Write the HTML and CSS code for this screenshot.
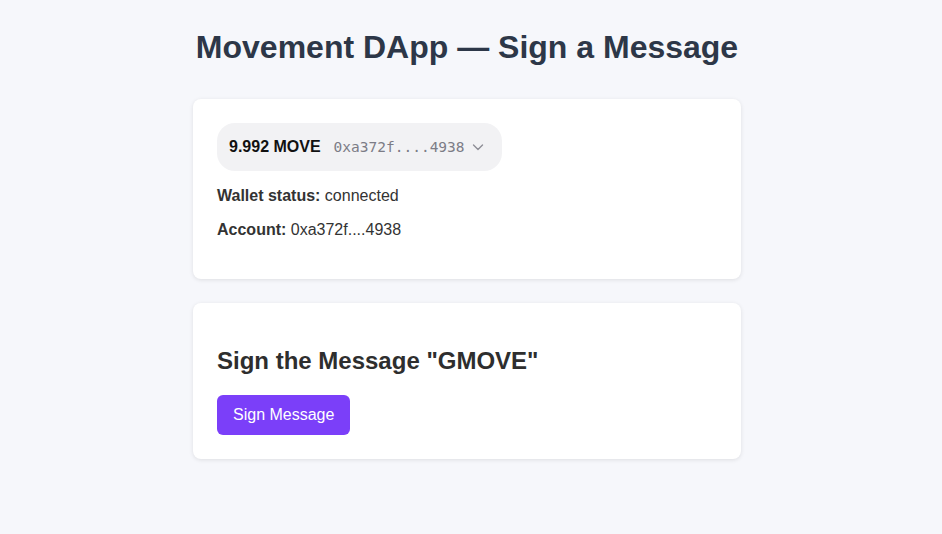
FILE: index.html
```html
<!DOCTYPE html>
<html>
<head>
<meta charset="utf-8">
<link rel="stylesheet" href="styles.css">
</head>
<body>
<main class="page">
  <h1 class="title">Movement DApp — Sign a Message</h1>
  <section class="card">
    <button class="wallet">
      <span class="balance">9.992 MOVE</span>
      <span class="addr">0xa372f....4938</span>
      <svg class="chev" width="12" height="12" viewBox="0 0 12 12"><path d="M1.5 4 L6 8.5 L10.5 4" fill="none" stroke="#8e8e96" stroke-width="1.4" stroke-linecap="round" stroke-linejoin="round"/></svg>
    </button>
    <p class="line"><strong>Wallet status:</strong> connected</p>
    <p class="line"><strong>Account:</strong> 0xa372f....4938</p>
  </section>
  <section class="card">
    <h2 class="heading">Sign the Message "GMOVE"</h2>
    <button class="sign">Sign Message</button>
  </section>
</main>
</body>
</html>
```
FILE: styles.css
```css
html, body {
  margin: 0;
  background: #f6f7fb;
}
body {
  font-family: "Liberation Sans", Arial, sans-serif;
  color: #333;
}
.page {
  width: 548px;
  margin: 0 auto;
  padding: 29px 0 40px;
  position: relative;
  left: -4px;
}
.title {
  margin: 0 0 24px;
  text-align: center;
  font-size: 32px;
  line-height: 37px;
  color: #2d3748;
  font-weight: bold;
}
.card {
  background: #fff;
  border-radius: 8px;
  padding: 24px;
  margin-bottom: 24px;
  box-shadow: 0 1px 4px rgba(0,0,0,0.1);
}
.page > .card:first-of-type { margin-top: 33px; }
.wallet {
  display: inline-flex;
  align-items: center;
  height: 48px;
  padding: 0 18px 0 12px;
  border: none;
  border-radius: 18px;
  background: #f2f2f4;
  font-family: inherit;
  cursor: pointer;
}
.balance {
  font-size: 16px;
  font-weight: bold;
  color: #111;
}
.addr {
  margin-left: 13px;
  font-family: "DejaVu Sans Mono", "Liberation Mono", monospace;
  font-size: 14.5px;
  color: #7c7c86;
}
.chev { margin-left: 7px; }
.line {
  margin: 16px 0;
  font-size: 16px;
  line-height: 18px;
}
.heading {
  margin: 20px 0 20px;
  font-size: 24px;
  line-height: 28px;
  color: #2e2e2e;
}
.sign {
  height: 40px;
  padding: 0 16px;
  border: none;
  border-radius: 6px;
  background: #7b3ff9;
  color: #fff;
  font-family: inherit;
  font-size: 16px;
  cursor: pointer;
}
```
